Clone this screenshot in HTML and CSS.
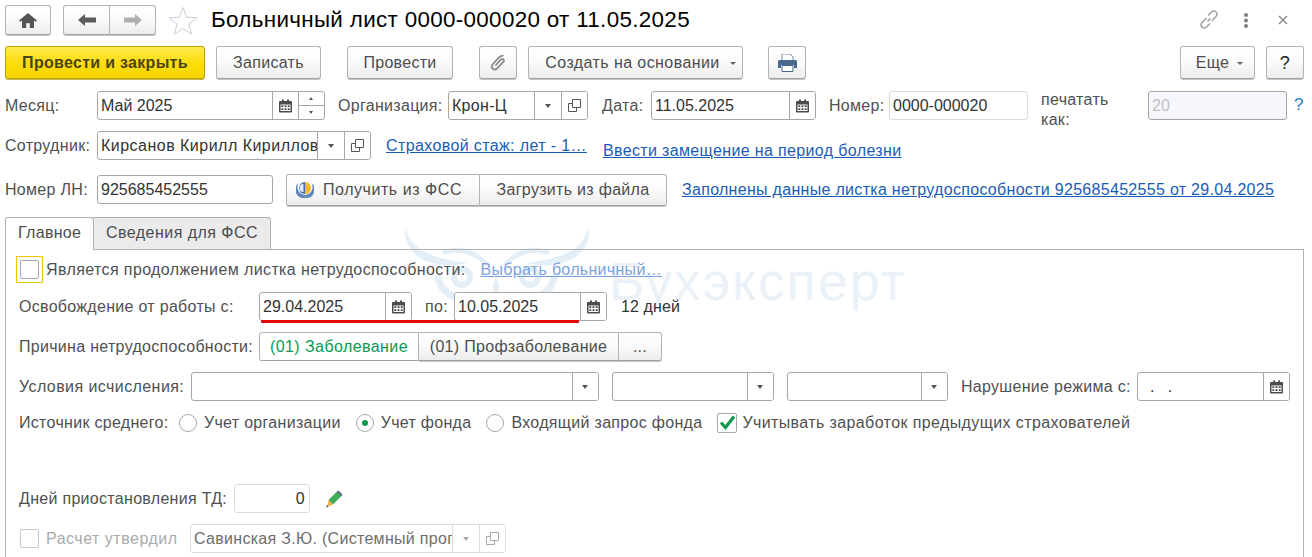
FILE: index.html
```html
<!DOCTYPE html>
<html lang="ru">
<head>
<meta charset="utf-8">
<title>Больничный лист</title>
<link rel="stylesheet" href="styles.css">
</head>
<body>
<svg class="defs" width="0" height="0" aria-hidden="true">
  <symbol id="i-cal" viewBox="0 0 13 14">
    <path d="M1 2h2V0.6h2V2h3V0.6h2V2h2q1 0 1 1v9.5q0 1-1 1H1q-1 0-1-1V3q0-1 1-1z" fill="#4d4d4d"/>
    <path d="M1.5 5.5h10v6.6h-10z" fill="#fff"/>
    <path d="M2.3 6.3h2v1.6h-2zM5.5 6.3h2v1.6h-2zM8.7 6.3h2v1.6h-2zM2.3 9.3h2v1.6h-2zM5.5 9.3h2v1.6h-2zM8.7 9.3h2v1.6h-2z" fill="#4d4d4d"/>
  </symbol>
  <symbol id="i-open" viewBox="0 0 13 13">
    <path d="M4.5 .5h8v8h-8z M.5 4.5h4 M.5 4.5v8h8v-4" fill="none" stroke="#555" stroke-width="1"/>
  </symbol>
</svg>

<div class="page">
  <svg class="watermark-logo" viewBox="0 0 200 96" aria-hidden="true">
    <g fill="none" stroke="#e4eef7">
      <circle cx="65" cy="52" r="8" stroke-width="6"/>
      <circle cx="133" cy="52" r="8" stroke-width="6"/>
      <path d="M40 50c4 20 22 28 40 20M158 50c-4 20-22 28-40 20" stroke-width="7"/>
      <path d="M46 28c14-6 32-2 44 12M152 28c-14-6-32-2-44 12" stroke-width="5"/>
    </g>
    <g fill="#e4eef7">
      <path d="M9 4c6 24 32 30 62 34-26 6-46 0-56-12C9 18 7 10 9 4z"/>
      <path d="M191 4c-6 24-32 30-62 34 26 6 46 0 56-12 6-8 8-16 6-22z"/>
      <path d="M96 60l3 34 3-34-3-8z"/>
    </g>
  </svg>
  <div class="watermark-text">Бухэксперт</div>

  <header class="title-row">
    <button class="btn nav-home" type="button" aria-label="Начало">
      <svg width="18" height="15" viewBox="0 0 18 15"><path d="M9 0l9 7.6-1.2 1.2L15 7.4V15h-4.2v-4.8H7.2V15H3V7.4L1.2 8.8 0 7.6z" fill="#555"/></svg>
    </button>
    <div class="btn-group nav-arrows">
      <button class="btn seg" type="button" aria-label="Назад">
        <svg width="18" height="12" viewBox="0 0 18 12"><path d="M0 6l7-6v3.6h11v4.8H7V12z" fill="#5c5c5c"/></svg>
      </button>
      <button class="btn seg" type="button" aria-label="Вперед">
        <svg width="18" height="12" viewBox="0 0 18 12"><path d="M18 6l-7-6v3.6H0v4.8h11V12z" fill="#aeaeae"/></svg>
      </button>
    </div>
    <svg class="star" width="30" height="29" viewBox="0 0 30 29"><path d="M15 1.5l3.7 9.7 10.3.5-8.1 6.5 2.8 10-8.7-5.7-8.7 5.7 2.8-10L1 11.7l10.3-.5z" fill="#fff" stroke="#c6cfd8"/></svg>
    <h1 class="title">Больничный лист 0000-000020 от 11.05.2025</h1>
    <div class="window-tools">
      <svg width="20" height="20" viewBox="0 0 20 20"><path d="M8.5 11.5l3-3M7.5 8L3 12.500q-2 2.500 0 4.500t4.500 0L11 13.500M9 5.500l3.500-3.500q2.500-2 4.500 0t0 4.500L13 11" fill="none" stroke="#a3a3a3" stroke-width="1.600"/></svg>
      <svg width="6" height="15" viewBox="0 0 6 15"><circle cx="3" cy="2" r="2" fill="#808080"/><circle cx="3" cy="7.500" r="2" fill="#808080"/><circle cx="3" cy="13" r="2" fill="#808080"/></svg>
      <svg width="10" height="10" viewBox="0 0 10 10"><path d="M1 1l8 8M9 1l-8 8" stroke="#8c8c8c" stroke-width="1.500"/></svg>
    </div>
  </header>

  <nav class="command-row">
    <button class="btn btn-primary" type="button">Провести и закрыть</button>
    <button class="btn btn-save" type="button">Записать</button>
    <button class="btn btn-post" type="button">Провести</button>
    <button class="btn btn-clip" type="button" aria-label="Файлы">
      <svg width="16" height="16" viewBox="0 0 16 16"><path d="M5.500 10.500l5.500-6q1.500-1.300 2.500 0t-.3 2.500L7 13.500q-2.200 2-4.200.3t-.3-4.300l6.500-7q2.500-2.300 4.500-1.500" fill="none" stroke="#8a8a8a" stroke-width="1.800"/></svg>
    </button>
    <button class="btn btn-create" type="button">Создать на основании<span class="caret caret-btn"></span></button>
    <button class="btn btn-print" type="button" aria-label="Печать">
      <svg width="19" height="18" viewBox="0 0 19 18"><path d="M4 0h8l3 3v4H4z" fill="#fff" stroke="#7c8ea3"/><path d="M1.500 6h16q1.500 0 1.500 1.500V14h-3v-3H3v3H0V7.500Q0 6 1.500 6z" fill="#48688c"/><path d="M4 11.500h11V17.500H4z" fill="#fff" stroke="#48688c"/></svg>
    </button>
    <button class="btn btn-more" type="button">Еще<span class="caret caret-btn"></span></button>
    <button class="btn btn-help" type="button">?</button>
  </nav>

  <section class="row row-period">
    <label class="lbl lbl-month">Месяц:</label>
    <div class="field f-month"><span class="val val-num">Май 2025</span>
      <span class="fbtn"><svg class="ico-cal"><use href="#i-cal"/></svg></span>
      <span class="spin"><i class="spin-up"></i><i class="spin-down"></i></span>
    </div>
    <label class="lbl lbl-org">Организация:</label>
    <div class="field f-org"><span class="val">Крон-Ц</span>
      <span class="fbtn"><span class="caret"></span></span>
      <span class="fbtn"><svg class="ico-open"><use href="#i-open"/></svg></span>
    </div>
    <label class="lbl lbl-date">Дата:</label>
    <div class="field f-date"><span class="val val-num">11.05.2025</span>
      <span class="fbtn"><svg class="ico-cal"><use href="#i-cal"/></svg></span>
    </div>
    <label class="lbl lbl-num">Номер:</label>
    <div class="field field-ro f-num"><span class="val val-num">0000-000020</span></div>
    <label class="lbl lbl-print">печатать как:</label>
    <div class="field field-off f-print"><span class="val val-num">20</span></div>
    <span class="hint">?</span>
  </section>

  <section class="row row-employee">
    <label class="lbl lbl-month">Сотрудник:</label>
    <div class="field f-emp"><span class="val val-wide">Кирсанов Кирилл Кириллович</span>
      <span class="fbtn"><span class="caret"></span></span>
      <span class="fbtn"><svg class="ico-open"><use href="#i-open"/></svg></span>
    </div>
    <a class="link link-stazh" href="#">Страховой стаж: лет - 1…</a>
    <a class="link link-replace" href="#">Ввести замещение на период болезни</a>
  </section>

  <section class="row row-ln">
    <label class="lbl lbl-month">Номер ЛН:</label>
    <div class="field f-ln"><span class="val val-num">925685452555</span></div>
    <div class="btn-group ln-buttons">
      <button class="btn seg seg-fss" type="button">
        <svg width="18" height="20" viewBox="0 0 18 20"><path d="M2.500 3a8.500 8.500 0 0 0 6.500 15 8.500 8.500 0 0 0 6.500-15 8 8 0 0 1-6.500 12A8 8 0 0 1 2.500 3z" fill="#5f86bd"/><path d="M9 2a6 6 0 0 1 0 12z" fill="#f2b632"/><path d="M9 2a6 6 0 0 0 0 12z" fill="#3f6fb0"/><path d="M7.500 4a4 4 0 0 0 0 8z" fill="#dfe9f5"/></svg>
        Получить из ФСС
      </button>
      <button class="btn seg seg-load" type="button">Загрузить из файла</button>
    </div>
    <a class="link link-filled" href="#">Заполнены данные листка нетрудоспособности 925685452555 от 29.04.2025</a>
  </section>

  <div class="tabs">
    <span class="tab tab-active">Главное</span>
    <span class="tab">Сведения для ФСС</span>
  </div>

  <main class="panel">
    <div class="marker"></div>

    <div class="panel-row row-cont">
      <span class="focus-frame"><span class="check"></span></span>
      <span class="lbl lbl-cont">Является продолжением листка нетрудоспособности:</span>
      <a class="link link-faded" href="#">Выбрать больничный…</a>
    </div>

    <div class="panel-row row-dates">
      <label class="lbl lbl-free">Освобождение от работы с:</label>
      <div class="field f-day"><span class="val val-num">29.04.2025</span>
        <span class="fbtn"><svg class="ico-cal"><use href="#i-cal"/></svg></span>
      </div>
      <label class="lbl lbl-to">по:</label>
      <div class="field f-day"><span class="val val-num">10.05.2025</span>
        <span class="fbtn"><svg class="ico-cal"><use href="#i-cal"/></svg></span>
      </div>
      <span class="days">12 дней</span>
    </div>

    <div class="panel-row row-reason">
      <label class="lbl lbl-free">Причина нетрудоспособности:</label>
      <div class="btn-group reason-group">
        <button class="btn seg seg-ill" type="button">(01) Заболевание</button>
        <button class="btn seg seg-prof" type="button">(01) Профзаболевание</button>
        <button class="btn seg seg-dots" type="button">...</button>
      </div>
    </div>

    <div class="panel-row row-cond">
      <label class="lbl lbl-cond">Условия исчисления:</label>
      <div class="field f-cond1"><span class="val"></span><span class="fbtn"><span class="caret"></span></span></div>
      <div class="field f-cond2"><span class="val"></span><span class="fbtn"><span class="caret"></span></span></div>
      <div class="field f-cond3"><span class="val"></span><span class="fbtn"><span class="caret"></span></span></div>
      <label class="lbl lbl-viol">Нарушение режима с:</label>
      <div class="field f-day"><span class="val val-pre">  .   .</span>
        <span class="fbtn"><svg class="ico-cal"><use href="#i-cal"/></svg></span>
      </div>
    </div>

    <div class="panel-row row-source">
      <label class="lbl lbl-src">Источник среднего:</label>
      <span class="radio"></span><span class="lbl opt">Учет организации</span>
      <span class="radio radio-on"></span><span class="lbl opt">Учет фонда</span>
      <span class="radio"></span><span class="lbl opt">Входящий запрос фонда</span>
      <span class="check check-green">
        <svg width="19" height="17" viewBox="0 0 19 17"><path d="M3 8.500l4.500 5L16 2.500" fill="none" stroke="#0f9a4c" stroke-width="3.200"/></svg>
      </span>
      <span class="lbl opt-check">Учитывать заработок предыдущих страхователей</span>
    </div>

    <div class="panel-row row-pause">
      <label class="lbl lbl-pause">Дней приостановления ТД:</label>
      <div class="field field-ro f-pause"><span class="val val-right">0</span></div>
      <svg class="pencil" width="18" height="18" viewBox="0 0 18 18"><path d="M3.500 10L11.500 2 16 6.500 8 14.500z" fill="#3fae57"/><path d="M11.500 2l1-1q.7-.7 1.400 0l3.100 3q.7.7 0 1.400L16 6.500z" fill="#5c6a78"/><path d="M3.500 10L8 14.500 2 17z" fill="#eeb04e"/><path d="M2 15l1.500 1.400L1 17.500z" fill="#444"/></svg>
    </div>

    <div class="panel-row row-approve">
      <span class="check check-off"></span>
      <span class="lbl lbl-off">Расчет утвердил</span>
      <div class="field field-dim f-appr"><span class="val">Савинская З.Ю. (Системный программист)</span>
        <span class="fbtn"><span class="caret caret-dim"></span></span>
        <span class="fbtn"><svg class="ico-open ico-dim"><use href="#i-open"/></svg></span>
      </div>
    </div>
  </main>
</div>
</body>
</html>
```

FILE: styles.css
```css
* { box-sizing: border-box; }
html, body { margin: 0; padding: 0; background: #fff; }
body {
  width: 1312px; height: 557px; overflow: hidden;
  font: 16px/20px "Liberation Sans", Arial, sans-serif;
  letter-spacing: .3px;
  color: #4d4d4d;
}
.defs { position: absolute; }
.page { position: relative; width: 1312px; height: 557px; overflow: hidden; }

/* watermark */
.watermark-logo { position: absolute; left: 397px; top: 225px; width: 200px; height: 96px; }
.watermark-text {
  position: absolute; left: 609px; top: 250px;
  font-size: 54px; line-height: 62px; letter-spacing: 1.800px; color: #eaf1f8;
}

/* buttons */
.btn {
  display: flex; align-items: center; justify-content: center;
  height: 100%; padding: 0; margin: 0;
  border: 1px solid #b4b4b4; border-radius: 3px;
  border-bottom-color: #a2a2a2;
  background: linear-gradient(#ffffff 0%, #fafafa 50%, #ececec 100%);
  box-shadow: 0 1px 0 #c4c4c4;
  font: inherit; letter-spacing: inherit; color: #4d4d4d; white-space: nowrap;
}
.btn-group { display: flex; }
.btn-group .seg { border-radius: 0; border-left-width: 0; }
.btn-group .seg:first-child { border-left-width: 1px; border-radius: 3px 0 0 3px; }
.btn-group .seg:last-child { border-radius: 0 3px 3px 0; }

/* title row */
.title-row { display: flex; align-items: center; height: 30px; margin-top: 5px; padding-left: 5px; position: relative; }
.nav-home { width: 46px; }
.nav-arrows { width: 93px; height: 100%; margin-left: 12px; }
.nav-arrows .seg { width: 47px; }
.nav-arrows .seg:last-child { width: 46px; }
.star { margin-left: 12px; }
.title { margin: 0 0 0 13px; font-size: 22.400px; letter-spacing: .33px; font-weight: 400; line-height: 30px; color: #000; white-space: nowrap; }
.window-tools { display: flex; align-items: center; margin-left: auto; padding-right: 24px; height: 30px; }
.window-tools svg:nth-child(2) { margin-left: 24px; }
.window-tools svg:nth-child(3) { margin-left: 29px; }

/* command row */
.command-row { display: flex; height: 33px; margin-top: 11px; padding-left: 5px; position: relative; }
.btn-primary {
  width: 200px; font-weight: 700; color: #4b4518;
  background: linear-gradient(#ffe94f 0%, #fbdc0a 55%, #f5d400 100%);
  border-color: #b9a100; box-shadow: 0 1px 0 #c7b452;
}
.btn-save { width: 105px; margin-left: 11px; }
.btn-post { width: 106px; margin-left: 26px; }
.btn-clip { width: 38px; margin-left: 26px; }
.btn-create { width: 215px; margin-left: 11px; padding-left: 10px; letter-spacing: .42px; }
.btn-create .caret-btn { margin-left: 10px; }
.btn-print { width: 38px; margin-left: 25px; }
.btn-more { width: 75px; margin-left: 374px; padding-left: 4px; }
.btn-help { width: 38px; margin-left: 11px; font-size: 18px; color: #222; }
.caret {
  display: block; width: 0; height: 0;
  border-left: 3.5px solid transparent; border-right: 3.5px solid transparent; border-top: 4px solid #555;
}
.caret-btn { margin-left: 8px; margin-top: 1px; border-top-color: #666; border-left-width: 3px; border-right-width: 3px; border-top-width: 3px; }
.caret-dim { border-top-color: #aaa; }

/* form rows */
.row { display: flex; align-items: center; height: 29px; padding-left: 5px; position: relative; }
.row-period { margin-top: 12px; }
.row-employee { margin-top: 11px; }
.row-ln { margin-top: 15px; }
.lbl { white-space: nowrap; color: #505050; flex: none; }
.lbl-month { width: 92px; }
.lbl-org { width: 110px; margin-left: 13px; }
.lbl-date { width: 49px; margin-left: 14px; }
.lbl-num { width: 60px; margin-left: 13px; }
.lbl-print { width: 107px; margin-left: 13px; white-space: normal; align-self: flex-start; margin-top: -1px; padding-right: 30px; }

/* fields */
.field {
  display: flex; height: 29px; flex: none;
  border: 1px solid #a6a6a6; border-radius: 3px; background: #fff; overflow: hidden;
  color: #333;
}
.val { flex: 1; min-width: 0; padding-left: 3px; line-height: 27px; white-space: nowrap; overflow: hidden; }
.val-num { letter-spacing: 0; }
.val-wide { letter-spacing: .48px; }
.val-right { text-align: right; padding-right: 4px; }
.val-pre { white-space: pre; letter-spacing: 0; }
.fbtn {
  display: flex; align-items: center; justify-content: center;
  flex: none; width: 26.500px; border-left: 1px solid #a6a6a6; background: #fff;
}
.ico-cal { width: 13px; height: 14px; }
.ico-open { width: 13px; height: 13px; }
.ico-dim { opacity: .5; }
.spin { display: flex; flex-direction: column; flex: none; width: 26px; border-left: 1px solid #a6a6a6; }
.spin i { display: block; flex: 1; position: relative; }
.spin-up { border-bottom: 1px solid #a6a6a6; }
.spin-up::after, .spin-down::after {
  content: ""; position: absolute; left: 10px; top: 5px;
  border-left: 2.500px solid transparent; border-right: 2.500px solid transparent;
}
.spin-up::after { border-bottom: 3px solid #555; }
.spin-down::after { border-top: 3px solid #555; }
.field-ro { border-color: #dcdcdc; }
.field-off { border-color: #a6a6a6; background: #f5f7fd; color: #c0c0c0; }
.field-dim { border-color: #dcdcdc; color: #6e6e6e; }
.field-dim .fbtn { border-left-color: #dcdcdc; }
.f-month { width: 228px; }
.f-org { width: 140px; }
.f-date { width: 165px; }
.f-num { width: 139px; }
.f-print { width: 139px; }
.f-emp { width: 274px; }
.f-ln { width: 176px; }
.f-day { width: 153px; }
.f-cond1 { width: 408px; }
.f-cond2 { width: 162px; margin-left: 13px; }
.f-cond3 { width: 161px; margin-left: 13px; }
.f-pause { width: 76px; }
.f-appr { width: 316px; }
.hint { margin-left: 7px; margin-top: -2px; color: #1f7cc4; font-size: 17px; letter-spacing: 0; }

/* links */
.link { color: #1a5cb4; text-decoration: underline; white-space: nowrap; }
.link-stazh { margin-left: 15px; letter-spacing: .38px; }
.link-replace { margin-left: 16px; margin-top: 10px; letter-spacing: .36px; }
.link-filled { margin-left: 15px; }
.link-faded { margin-left: 15px; color: #7aa2de; }

/* LN buttons */
.ln-buttons { width: 381px; height: 32px; margin-left: 13px; }
.seg-fss { width: 194px; gap: 9px; justify-content: flex-start; padding-left: 9px; letter-spacing: .55px; }
.seg-load { width: 187px; }

/* tabs */
.tabs { display: flex; height: 33px; margin-top: 13px; margin-left: 5px; position: relative; }
.tab {
  display: block; height: 33px; padding: 5px 0 0 12px; white-space: nowrap;
  border: 1px solid #b0b0b0; border-left-width: 0; border-radius: 0 3px 0 0;
  background: #ebebeb; color: #4d4d4d;
}
.tab-active {
  width: 89px; border-left-width: 1px; border-bottom-color: #fff; border-radius: 3px 3px 0 0; background: #fff; position: relative; z-index: 2; border-right-width: 1px;
}
.tabs .tab:last-child { width: 177px; margin-left: 0; padding-left: 12px; letter-spacing: .46px; }

/* panel */
.panel {
  position: relative; margin: -1px 0 0 5px; width: 1299px; height: 330px;
  border: 1px solid #b0b0b0; padding: 6px 0 0 13px;
}
.panel-row { display: flex; align-items: center; height: 29px; margin-top: 11px; position: relative; }
.marker { position: absolute; left: 255px; top: 70px; width: 318px; height: 3px; background: #e60000; z-index: 3; border-radius: 1px; }

.row-cont { height: 27px; margin-top: 0; margin-left: -3px; }
.row-dates { margin-top: 9px; }
.focus-frame {
  display: flex; align-items: center; justify-content: center;
  width: 27px; height: 27px; border: 1px solid #f0c400; flex: none;
}
.check { display: block; width: 19px; height: 19px; border: 1px solid #a8a8a8; border-radius: 2px; background: #fff; flex: none; }
.lbl-cont { margin-left: 3px; letter-spacing: .39px; }
.lbl-free { width: 240px; }
.lbl-to { width: 29px; margin-left: 13px; }
.days { margin-left: 14px; color: #333; letter-spacing: .1px; }
.reason-group { height: 29px; width: 403px; }
.seg-ill { width: 160px; background: #fff; box-shadow: none; color: #0a9a50; letter-spacing: .42px; }
.seg-prof { width: 200px; }
.seg-dots { width: 43px; }
.lbl-cond { width: 172px; letter-spacing: .42px; }
.lbl-viol { width: 176px; margin-left: 13px; }
.row-source { margin-top: 7px; }
.lbl-src { width: 160px; }
.radio {
  display: block; position: relative; width: 18px; height: 18px; flex: none;
  border: 1px solid #a8a8a8; border-radius: 50%; background: #fff;
}
.radio-on::after {
  content: ""; position: absolute; left: 5px; top: 5px; width: 6px; height: 6px;
  border-radius: 50%; background: #0f9a4c;
}
.opt { margin-left: 7px; margin-right: 15px; }
.check-green { width: 20px; height: 20px; position: relative; }
.check-green svg { display: block; margin: 0; }
.opt-check { margin-left: 5px; letter-spacing: .39px; }
.row-pause { margin-top: 47px; }
.lbl-pause { width: 215px; }
.pencil { margin-left: 15px; }
.check-off { margin-left: 1px; border-color: #c8c8c8; }
.lbl-off { width: 144px; margin-left: 7px; color: #ababab; letter-spacing: .5px; }
.row-approve { margin-top: 11px; }
```
